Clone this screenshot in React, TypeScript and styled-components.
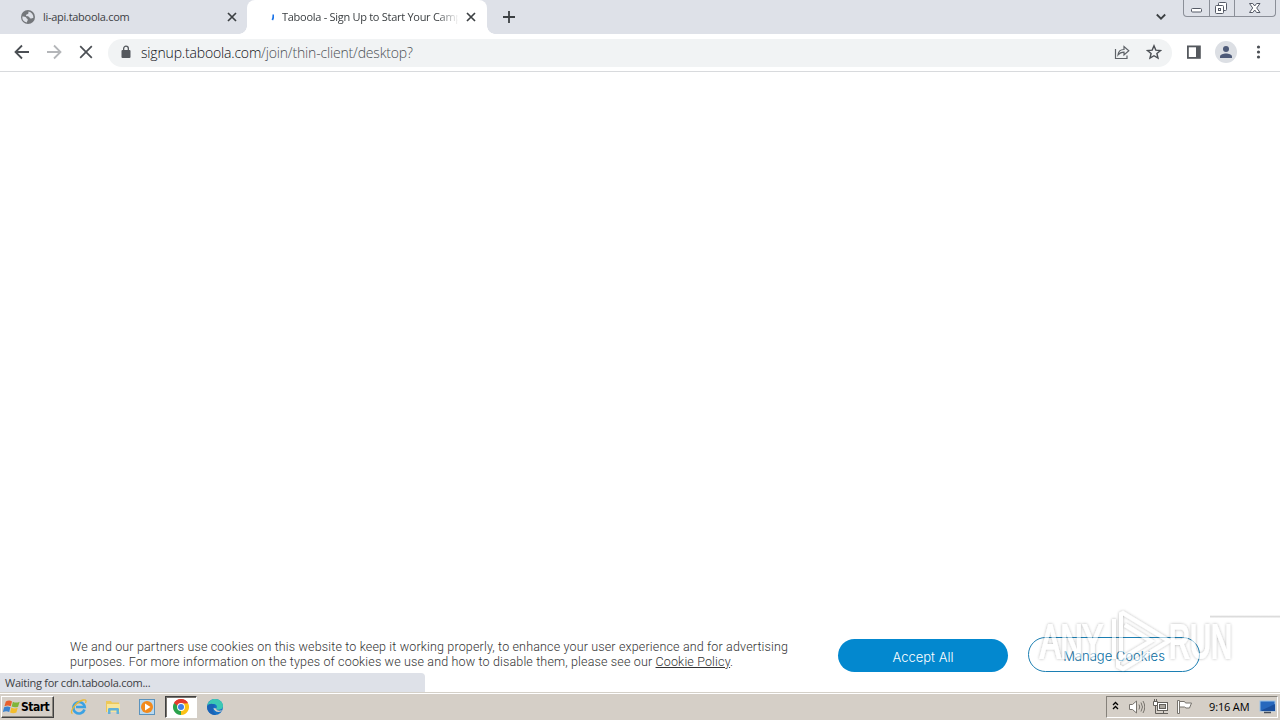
import React from "react";
import styled, { createGlobalStyle } from "styled-components";

const GlobalStyle = createGlobalStyle`
  * {
    box-sizing: border-box;
  }
  body {
    margin: 0;
    overflow: hidden;
    font-family: "Noto Sans", sans-serif;
  }
  svg {
    display: block;
    flex: none;
  }
`;

const Screen = styled.div`
  position: relative;
  display: flex;
  flex-direction: column;
  width: 1280px;
  height: 720px;
  background: #fff;
`;

/* Browser tabs */

const TabStrip = styled.div`
  display: flex;
  height: 34px;
  background: #dee1e8;
`;

const Tab = styled.div<{ $active?: boolean; $width: number; $inset: number }>`
  position: relative;
  display: flex;
  align-items: center;
  width: ${(p) => p.$width}px;
  padding: 0 ${(p) => (p.$active ? 9 : 8)}px 0 ${(p) => p.$inset}px;
  background: ${(p) => (p.$active ? "#fff" : "transparent")};
  border-radius: 8px 8px 0 0;
  &::before,
  &::after {
    content: "";
    display: ${(p) => (p.$active ? "block" : "none")};
    position: absolute;
    bottom: 0;
    width: 8px;
    height: 8px;
  }
  &::before {
    left: -8px;
    background: radial-gradient(circle at 0 0, transparent 7.5px, #fff 8px);
  }
  &::after {
    right: -8px;
    background: radial-gradient(circle at 100% 0, transparent 7.5px, #fff 8px);
  }
`;

const TabTitle = styled.span<{ $fade?: boolean }>`
  flex: 1;
  margin-left: 8px;
  overflow: hidden;
  white-space: nowrap;
  font-family: "Open Sans", sans-serif;
  font-size: 11px;
  line-height: 18px;
  letter-spacing: -0.28px;
  color: #3c4043;
  mask-image: ${(p) =>
    p.$fade ? "linear-gradient(to right, #000 155px, transparent 177px)" : "none"};
`;

const TabClose = styled.div`
  width: 14px;
  margin-left: 6px;
`;

const NewTab = styled.div`
  display: flex;
  align-items: center;
  padding-left: 14px;
`;

const TabMenu = styled.div`
  display: flex;
  align-items: center;
  margin-left: auto;
  padding-right: 17px;
`;

const WindowControls = styled.div`
  display: flex;
  width: 93px;
  height: 17px;
  margin-right: 4px;
  border: 1px solid #8b8f98;
  border-top: 0;
  border-radius: 0 0 4px 4px;
`;

const WindowButton = styled.div<{ $width: number }>`
  display: flex;
  justify-content: center;
  width: ${(p) => p.$width}px;
  & + & {
    border-left: 1px solid #8b8f98;
  }
`;

/* Address bar */

const Toolbar = styled.div`
  display: flex;
  align-items: center;
  height: 38px;
  padding: 0 13px;
  border-bottom: 1px solid #d8dadd;
`;

const NavButtons = styled.div`
  display: flex;
  gap: 14px;
  margin-top: -1px;
`;

const AddressBar = styled.div`
  display: flex;
  align-items: center;
  width: 1064px;
  height: 28px;
  margin-left: 13px;
  padding: 0 10px 0 11px;
  background: #f1f3f4;
  border-radius: 14px;
`;

const Url = styled.span`
  margin-left: 8px;
  font-family: "Open Sans", sans-serif;
  font-weight: 300;
  font-size: 14px;
  line-height: 20px;
  letter-spacing: -0.17px;
  white-space: nowrap;
  color: #101114;
  span {
    color: #4c5054;
  }
`;

const AddressActions = styled.div`
  display: flex;
  gap: 16px;
  margin: -2px 0 0 auto;
`;

const BrowserActions = styled.div`
  display: flex;
  align-items: center;
  margin: -2px 0 0 14px;
`;

const Avatar = styled.div`
  margin: 0 13px 0 13px;
`;

/* Page */

const Page = styled.main`
  display: flex;
  flex-direction: column;
  justify-content: flex-end;
  flex: 1;
`;

const ConsentEdge = styled.div`
  align-self: flex-end;
  width: 70px;
  height: 3px;
  background: linear-gradient(#fff, #dcdcdc, #f6f6f6);
`;

const Consent = styled.section`
  display: flex;
  align-items: flex-start;
  height: 55px;
  padding: 18px 0 0 70px;
`;

const ConsentText = styled.p`
  width: 768px;
  margin: 3px 0 0;
  font-family: Roboto, sans-serif;
  font-weight: 300;
  font-size: 12.5px;
  line-height: 15px;
  letter-spacing: 0.155px;
  white-space: nowrap;
  color: #333;
  a {
    text-decoration: underline;
  }
`;

const ConsentButton = styled.button<{ $primary?: boolean }>`
  width: ${(p) => (p.$primary ? 170 : 172)}px;
  height: ${(p) => (p.$primary ? 33 : 35)}px;
  margin: ${(p) => (p.$primary ? "3px 20px 0 0" : "1px 0 0")};
  padding: 3px 0 0;
  font-family: Inter, sans-serif;
  font-weight: 300;
  font-size: 13px;
  border: ${(p) => (p.$primary ? "0" : "1px solid #1c7fb3")};
  border-radius: 18px;
  color: ${(p) => (p.$primary ? "#fff" : "#0a6fa5")};
  background: ${(p) => (p.$primary ? "#0388cf" : "#fff")};
`;

const StatusBubble = styled.div`
  width: 425px;
  height: 19px;
  padding-left: 5px;
  font-family: "Open Sans", sans-serif;
  font-size: 11px;
  line-height: 19px;
  letter-spacing: -0.26px;
  color: #3c4043;
  background: #dee1e8;
  border-radius: 0 4px 0 0;
`;

const Watermark = styled.div`
  position: absolute;
  left: 1030px;
  top: 602px;
`;

/* Taskbar */

const Taskbar = styled.footer`
  display: flex;
  align-items: center;
  height: 28px;
  padding: 0 2px 0 1px;
  border-top: 1px solid #d4d0c8;
  box-shadow: inset 0 1px #fff;
  background: #d5cfc7;
`;

const StartButton = styled.div`
  display: flex;
  align-items: center;
  width: 53px;
  height: 22px;
  padding-left: 1px;
  border: 1px solid;
  border-color: #fff #404040 #404040 #fff;
  box-shadow: inset -1px -1px #8a867e;
  font-family: "DejaVu Sans Condensed", sans-serif;
  font-weight: 700;
  font-size: 12px;
  letter-spacing: -0.5px;
  color: #000;
`;

const QuickLaunch = styled.div`
  display: flex;
  align-items: center;
  margin-left: 8px;
`;

const TaskItem = styled.div<{ $pressed?: boolean }>`
  display: flex;
  align-items: center;
  justify-content: center;
  width: ${(p) => (p.$pressed ? 32 : 34)}px;
  margin: ${(p) => (p.$pressed ? "0 1px" : "0")};
  height: 22px;
  border: ${(p) => (p.$pressed ? "1px solid" : "0")};
  border-color: #404040 #fff #fff #404040;
  box-shadow: ${(p) => (p.$pressed ? "inset 1px 1px #77736d" : "none")};
  background: ${(p) => (p.$pressed ? "#fff" : "transparent")};
`;

const Tray = styled.div`
  display: flex;
  align-items: center;
  width: 172px;
  height: 22px;
  margin-left: auto;
  padding-left: 4px;
  border: 1px solid;
  border-color: #85817a #fff #fff #85817a;
`;

const TrayIcons = styled.div`
  display: flex;
  align-items: center;
  gap: 6px;
`;

const Clock = styled.span`
  width: 43px;
  margin: 0 7px 0 16px;
  font-family: "Open Sans", sans-serif;
  font-size: 11px;
  letter-spacing: -0.15px;
  white-space: nowrap;
  color: #000;
`;

const CloseIcon = () => (
  <svg width="14" height="14" viewBox="0 0 14 14" stroke="#3c4043" strokeWidth="1.7">
    <path d="M3 3l8 8M11 3l-8 8" />
  </svg>
);

const GlobeIcon = () => (
  <svg width="14" height="14" viewBox="0 0 14 14">
    <circle cx="7" cy="7" r="7" fill="#74777b" />
    <path
      d="M7.500 1.600c-.2 1.300.3 1.700-.6 2.400-1 .6-1.700.3-1.900 1.500-.1.900 1.600.6 2.400.9 1.500.5 1 1.900 2.300 2 1 .1 1.700-.3 2.700-.6A5.800 5.800 0 0 0 7.500 1.600z"
      fill="#dee1e8"
    />
    <path d="M1.300 6.500c1.500.1 3.300.1 4 1.300.5 1.200 1.500 1 1.500 2 0 .9-1 1.500-.8 2.800A5.800 5.800 0 0 1 1.300 6.500z" fill="#dee1e8" />
  </svg>
);

const WatermarkLogo = () => (
  <svg width="214" height="76" viewBox="0 0 214 76">
    <defs>
      <filter id="glow" x="-10%" y="-20%" width="120%" height="140%">
        <feDropShadow dx="0" dy="0" stdDeviation="1.800" floodColor="#000" floodOpacity="0.5" />
      </filter>
    </defs>
    <g
      filter="url(#glow)"
      opacity="0.6"
      fill="#fff"
      stroke="#fff"
      fontFamily="Liberation Sans, sans-serif"
      fontSize="48"
    >
      <text x="10" y="56" strokeWidth="2" textLength="63" lengthAdjust="spacingAndGlyphs">
        ANY
      </text>
      <text x="139" y="56" strokeWidth="2" textLength="63" lengthAdjust="spacingAndGlyphs">
        RUN
      </text>
      <path
        d="M88 57V64L93 67L139 39L93 11L91 12V57L121 39L95 23M84 17V57"
        fill="none"
        strokeWidth="4"
      />
    </g>
  </svg>
);

const App: React.FC = () => {
  return (
    <Screen>
      <GlobalStyle />
      <TabStrip>
        <Tab $width={247} $inset={21}>
          <GlobeIcon />
          <TabTitle>li-api.taboola.com</TabTitle>
          <TabClose>
            <CloseIcon />
          </TabClose>
        </Tab>
        <Tab $active $width={240} $inset={13}>
          <svg width="14" height="16" viewBox="0 0 14 16">
            <path d="M13.3 5.5c.2 2.400-.1 4-1 5.500" fill="none" stroke="#1a73e8" strokeWidth="1.800" />
          </svg>
          <TabTitle $fade>Taboola - Sign Up to Start Your Camp</TabTitle>
          <TabClose>
            <CloseIcon />
          </TabClose>
        </Tab>
        <NewTab>
          <svg width="16" height="16" viewBox="0 0 16 16" stroke="#3c4043" strokeWidth="1.8">
            <path d="M8 2v12M2 8h12" />
          </svg>
        </NewTab>
        <TabMenu>
          <svg width="10" height="8" viewBox="0 0 10 8" fill="none" stroke="#3c4043" strokeWidth="1.8">
            <path d="M.8 1.500L5 5.700L9.200 1.500" />
          </svg>
        </TabMenu>
        <WindowControls>
          <WindowButton $width={25}>
            <svg width="12" height="16" viewBox="0 0 12 16">
              <rect x=".5" y="8.500" width="10" height="3.500" rx="1" fill="#fff" stroke="#555a66" />
            </svg>
          </WindowButton>
          <WindowButton $width={25}>
            <svg width="14" height="16" viewBox="1 0 14 16" fill="#fff" stroke="#555a66">
              <rect x="4.500" y="2.500" width="8" height="8" rx="1" />
              <rect x="1.500" y="5.500" width="8" height="8" rx="1" />
              <rect x="4.500" y="8.500" width="2" height="2" />
            </svg>
          </WindowButton>
          <WindowButton $width={41}>
            <svg width="13" height="16" viewBox="1 0 13 16" fill="#fff" stroke="#555a66">
              <path d="M1.500 3.500h3.300l1.900 2.500l1.900-2.500H12L8.700 8l3.300 4.500H8.600l-1.900-2.500l-1.900 2.500H1.500L4.700 8z" />
            </svg>
          </WindowButton>
        </WindowControls>
      </TabStrip>

      <Toolbar>
        <NavButtons>
          <svg width="18" height="18" viewBox="0 0 18 18" fill="none" stroke="#4b4f54" strokeWidth="1.800">
            <path d="M16 9H3M9 2.500L2.500 9L9 15.500" />
          </svg>
          <svg width="18" height="18" viewBox="0 0 18 18" fill="none" stroke="#b4b6b9" strokeWidth="1.800">
            <path d="M2 9h13M9 2.500L15.500 9L9 15.500" />
          </svg>
          <svg width="18" height="18" viewBox="0 0 18 18" fill="none" stroke="#4b4f54" strokeWidth="1.700">
            <path d="M3.200 3.200L14.800 14.800M14.800 3.200L3.200 14.800" />
          </svg>
        </NavButtons>
        <AddressBar>
          <svg width="14" height="16" viewBox="0 0 14 16">
            <rect x="2.500" y="5" width="9" height="8" rx="1" fill="#55595e" />
            <path d="M4.650 5V3.500a2.350 2.350 0 0 1 4.700 0V5" fill="none" stroke="#55595e" strokeWidth="1.300" />
          </svg>
          <Url>
            signup.taboola.com<span>/join/thin-client/desktop?</span>
          </Url>
          <AddressActions>
            <svg width="16" height="16" viewBox="0 0 16 16" fill="none" stroke="#5f6368" strokeWidth="1.200">
              <path d="M1.500 5v9.500H13V11.500M4 11c.3-3.800 2.500-5.500 6-5.500V2.500L14.800 6.800L10 11V8.200C7.500 8.200 5.500 9 4 11z" />
            </svg>
            <svg width="16" height="16" viewBox="0 0 16 16" fill="none" stroke="#4b4f54" strokeWidth="1.400">
              <path d="M8 1.800l1.800 4.300 4.700.4-3.600 3 1.100 4.600L8 11.700l-4 2.400 1.100-4.600-3.600-3 4.700-.4z" />
            </svg>
          </AddressActions>
        </AddressBar>
        <BrowserActions>
          <svg width="16" height="16" viewBox="0 0 16 16">
            <rect x="1.900" y="2.400" width="12" height="11.500" fill="none" stroke="#55595e" strokeWidth="1.800" />
            <path d="M10 2h4v12h-4z" fill="#55595e" />
          </svg>
          <Avatar>
            <svg width="22" height="22" viewBox="0 0 22 22">
              <circle cx="11" cy="11" r="11" fill="#dcdfe4" />
              <circle cx="11" cy="8" r="3" fill="#4d5a78" />
              <path d="M5 17v-1.500c0-2 3.500-3 6-3s6 1 6 3V17z" fill="#4d5a78" />
            </svg>
          </Avatar>
          <svg width="16" height="16" viewBox="0 0 16 16" fill="#4b4f54">
            <circle cx="8.500" cy="3" r="1.600" />
            <circle cx="8.500" cy="8" r="1.600" />
            <circle cx="8.500" cy="13" r="1.600" />
          </svg>
        </BrowserActions>
      </Toolbar>

      <Page>
        <ConsentEdge />
        <Consent>
          <ConsentText>
            We and our partners use cookies on this website to keep it working properly, to enhance your user experience and for advertising
            <br />
            purposes. For more information on the types of cookies we use and how to disable them, please see our <a>Cookie Policy</a>.
          </ConsentText>
          <ConsentButton $primary>Accept All</ConsentButton>
          <ConsentButton>Manage Cookies</ConsentButton>
        </Consent>
        <StatusBubble>Waiting for cdn.taboola.com...</StatusBubble>
      </Page>

      <Taskbar>
        <StartButton>
          <svg width="18" height="18" viewBox="1 0 15 16">
            <path d="M3 3c2-1 4-1 5.500 0L7.400 7.400C5.500 6.400 4 6.500 1.800 7.300z" fill="#e8602c" />
            <path d="M9.300 3.300c2 1 3.500 1 6 0l-1.400 4.400c-2 .9-3.700.8-5.700-.1z" fill="#7fb539" />
            <path d="M1.500 8.200c2-.8 4-.8 5.600.1L6 12.500c-1.800-1-3.300-1-5.600-.1z" fill="#3b83cf" />
            <path d="M7.900 8.500c2 1 3.600 1 5.700.1l-1.200 4.300c-2 .9-3.800.8-5.600-.1z" fill="#f3bd2c" />
          </svg>
          Start
        </StartButton>
        <QuickLaunch>
          <TaskItem>
            <svg width="18" height="18" viewBox="0 0 18 18" fill="none">
              <path d="M14.500 11.500A5.700 5.700 0 1 1 14.700 9H6" stroke="#3ba2e3" strokeWidth="2.600" />
              <path d="M2.500 15.500C-1 15 5 4 13 2c3.500-.8 3.500 1 2.500 3" stroke="#eab935" strokeWidth="1.300" />
            </svg>
          </TaskItem>
          <TaskItem>
            <svg width="18" height="18" viewBox="0 0 18 18">
              <path d="M2 3h5l1 1.500h7V14H2z" fill="#edc858" />
              <path d="M3 6h13v8H3z" fill="#f8e59a" />
              <path d="M4 16v-4.500c0-1 .5-1.500 1.500-1.500h8c1 0 1.500.5 1.500 1.500V16h-2.500v-3.500h-6V16z" fill="#62b1d8" />
            </svg>
          </TaskItem>
          <TaskItem>
            <svg width="18" height="18" viewBox="0 0 18 18">
              <rect x="1.500" y="1.500" width="15" height="15" fill="#b9d9f0" stroke="#5b93bd" />
              <circle cx="9" cy="9" r="6" fill="#f28a1c" />
              <path d="M7 5.500l5.500 3.500L7 12.500z" fill="#fff" />
            </svg>
          </TaskItem>
          <TaskItem $pressed>
            <svg width="16" height="16" viewBox="0 0 16 16">
              <path d="M8 8L1.070 4A8 8 0 0 1 14.930 4z" fill="#e33b2e" />
              <path d="M8 8L14.930 4A8 8 0 0 1 8 16z" fill="#fbc116" />
              <path d="M8 8L8 16A8 8 0 0 1 1.070 4z" fill="#2ba24c" />
              <path d="M8 4.200h6.900L11.300 10z" fill="#fbc116" />
              <path d="M1.070 4L4.700 10L8 4.200z" fill="#2ba24c" />
              <path d="M1.070 4A8 8 0 0 1 14.930 4.300H8L4.600 7z" fill="#e33b2e" />
              <circle cx="8" cy="8" r="3.900" fill="#fff" />
              <circle cx="8" cy="8" r="3" fill="#3f7fe8" />
            </svg>
          </TaskItem>
          <TaskItem>
            <svg width="16" height="16" viewBox="0 0 16 16">
              <circle cx="8" cy="8" r="8" fill="#1671c6" />
              <path d="M.2 7C1 2.500 4.500 0 8 0c5 0 8 3.500 8 6.800 0 3-2.500 4-4.500 4-2.500 0-2.500-1-2-1.800.9-1.300.2-4-3-4C3.500 5 1.200 5.500.2 7z" fill="#3cc8b4" />
              <path d="M6.500 9c.2 3 3.500 4.700 7.500 3.600l1-1.300c-2.900 1-5.700.4-5.800-1.700z" fill="#d5cfc7" />
              <path d="M.2 7c2-3 7-3 7.500.2C5 8 5 13 9 15.900 4 16.400-.5 12.500.2 7z" fill="#1b62b5" />
            </svg>
          </TaskItem>
        </QuickLaunch>
        <Tray>
          <TrayIcons>
            <svg width="10" height="16" viewBox="0 0 10 16" fill="none" stroke="#000" strokeWidth="1.300">
              <path d="M2 6L4.500 3.500L7 6M2 10L4.500 7.500L7 10" />
            </svg>
            <svg width="18" height="16" viewBox="-1 0 18 16" fill="none" stroke="#77736d">
              <path d="M1.500 5.500h3l4-3.500v12l-4-3.500h-3z" fill="#fff" />
              <path d="M11 5.500q1.500 2.500 0 5M13 3.500q3 4.500 0 9M15 2q3.500 6 0 12" />
            </svg>
            <svg width="18" height="16" viewBox="-1 0 18 16" stroke="#625f5a">
              <rect x="5.500" y="3.500" width="10" height="8" fill="#fff" />
              <rect x="7.500" y="5.500" width="6" height="4" fill="#aaa69f" />
              <path d="M7 14.500h9M11.500 12v2M3.500 7v7.500h4" fill="none" />
              <path d="M1.500 2.500h4v4h-4zM2.500 0v2M4.500 0v2" fill="#fff" />
            </svg>
            <svg width="18" height="16" viewBox="-1 0 18 16" fill="#fff" stroke="#77736d">
              <path d="M1.500 1.500h2v13h-2z" />
              <path d="M3.500 2.500h5l1 1.500h6l-2 5H10L8.500 8h-5z" />
            </svg>
          </TrayIcons>
          <Clock>9:16 AM</Clock>
          <svg width="17" height="14" viewBox="0 0 17 14">
            <rect x="1" y="1" width="15" height="10" fill="#2768bd" stroke="#9cc3ea" />
            <path d="M1 11L16 4v7z" fill="#1a4f9d" />
            <path d="M5 12.500h7" stroke="#454c58" strokeWidth="1.500" />
          </svg>
        </Tray>
      </Taskbar>

      <Watermark>
        <WatermarkLogo />
      </Watermark>
    </Screen>
  );
};

export default App;
